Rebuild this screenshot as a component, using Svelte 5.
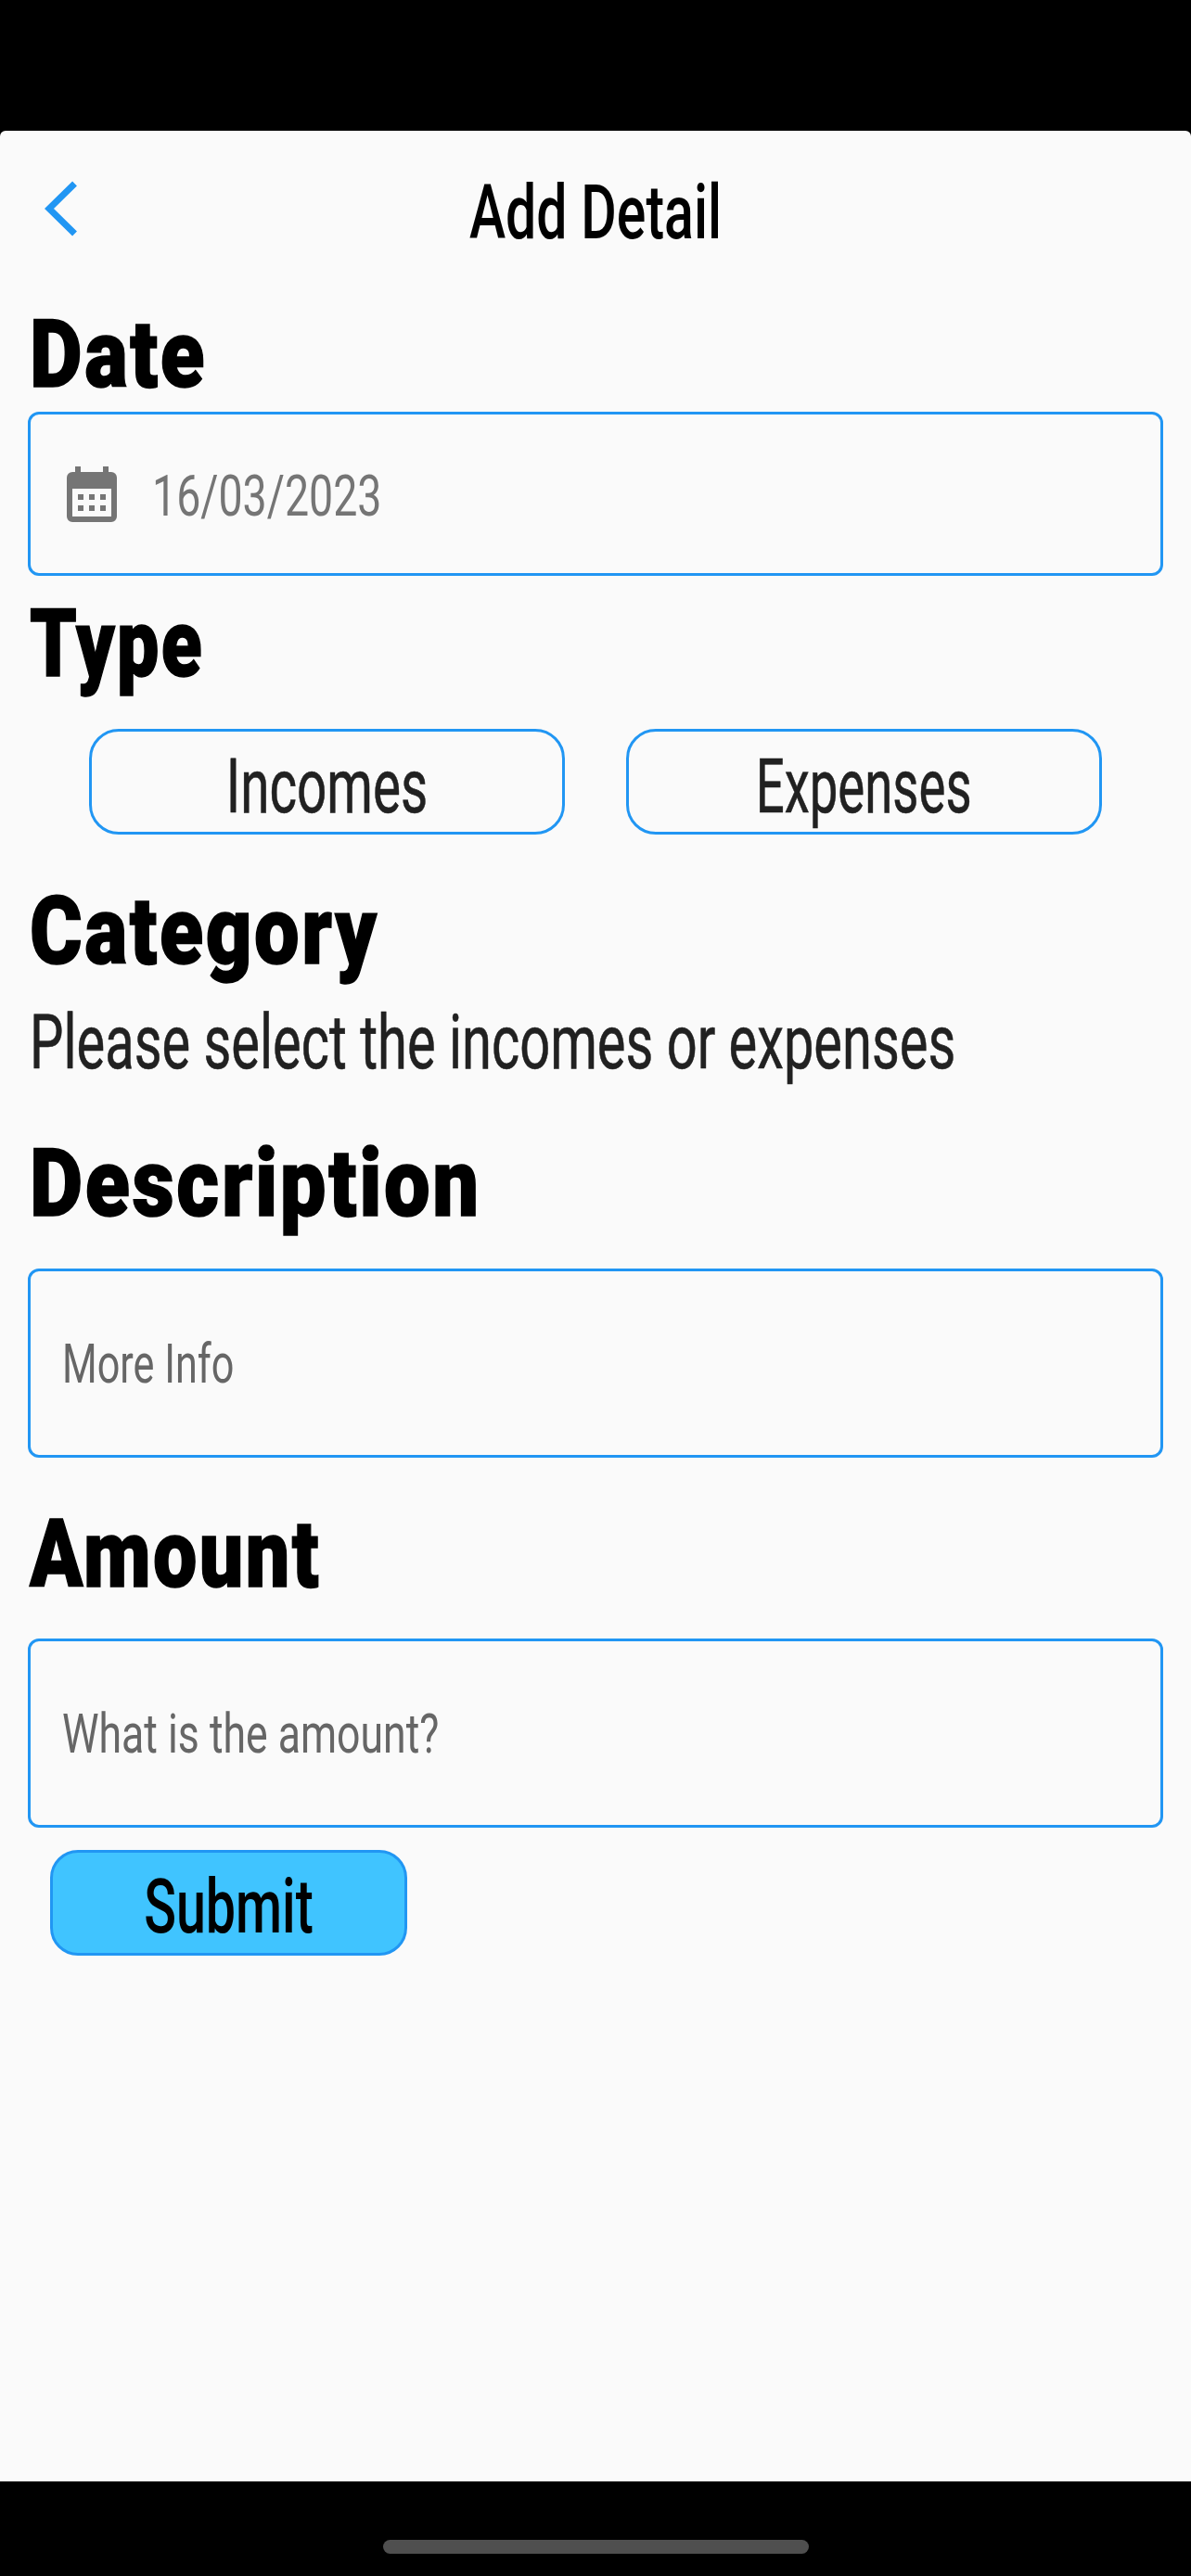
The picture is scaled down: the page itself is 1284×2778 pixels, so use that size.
<script lang="ts">
	// Add Detail form screen. Only static state, the type buttons do nothing yet.
	const date = '16/03/2023';
</script>

<div class="screen">
	<div class="status-bar"></div>

	<main class="page">
		<header class="top-bar">
			<svg class="back" viewBox="0 0 36 60" aria-hidden="true">
				<path d="M32.5 3 L5 30 L32.5 57" fill="none" stroke="#2196f3" stroke-width="7" />
			</svg>
			<h1 class="title"><span class="fit-c">Add Detail</span></h1>
		</header>

		<section class="date-field">
			<h2 class="label"><span class="fit w-date">Date</span></h2>
			<div class="input date-input">
				<svg class="calendar" viewBox="0 0 54 60" aria-hidden="true">
					<path
						fill="#757575"
						fill-rule="evenodd"
						d="M9 0h6v6h24V0h6v6h3a6 6 0 0 1 6 6v42a6 6 0 0 1-6 6H6a6 6 0 0 1-6-6V12a6 6 0 0 1 6-6h3zM6 24v30h42V24zM12 30h6v6h-6zM24 30h6v6h-6zM36 30h6v6h-6zM12 42h6v6h-6zM24 42h6v6h-6zM36 42h6v6h-6z"
					/>
				</svg>
				<span class="date-text"><span class="fit">{date}</span></span>
			</div>
		</section>

		<section class="type-field">
			<h2 class="label"><span class="fit w-type">Type</span></h2>
			<div class="type-row">
				<button class="type-btn"><span class="fit-c w-inc">Incomes</span></button>
				<button class="type-btn"><span class="fit-c w-exp">Expenses</span></button>
			</div>
		</section>

		<section class="category-field">
			<h2 class="label"><span class="fit w-cat">Category</span></h2>
			<p class="hint"><span class="fit">Please select the incomes or expenses</span></p>
		</section>

		<section class="desc-field">
			<h2 class="label"><span class="fit w-desc">Description</span></h2>
			<div class="input text-input"><span class="fit">More Info</span></div>
		</section>

		<section class="amount-field">
			<h2 class="label"><span class="fit w-amount">Amount</span></h2>
			<div class="input text-input amount-input"><span class="fit">What is the amount?</span></div>
		</section>

		<button class="submit"><span class="fit-c">Submit</span></button>
	</main>

	<footer class="nav-bar"><div class="home-pill"></div></footer>
</div>

<style>
	:global(body) {
		margin: 0;
		background: #000;
	}

	.screen {
		display: flex;
		flex-direction: column;
		height: 2778px;
		overflow: hidden;
		font-family: Roboto, 'Liberation Sans', sans-serif;
		background: #000;
	}

	.status-bar {
		flex: 0 0 141px;
	}

	.page {
		flex: 1;
		padding: 0 30px;
		background: #fafafa;
		border-radius: 6px 6px 0 0;
		overflow: hidden;
	}

	.nav-bar {
		flex: 0 0 102px;
		display: flex;
		justify-content: center;
		align-items: flex-start;
		padding-top: 63px;
		box-sizing: border-box;
	}

	.home-pill {
		width: 459px;
		height: 15px;
		border-radius: 8px;
		background: #4f4f4f;
	}

	/* condensed look: no Oswald here, so squeeze the sans */
	.fit,
	.fit-c {
		display: inline-block;
		white-space: nowrap;
		transform: scaleX(0.72);
		transform-origin: left center;
	}

	.fit-c {
		transform-origin: center;
	}

	.top-bar {
		display: grid;
		grid-template-columns: 1fr auto 1fr;
		align-items: center;
		height: 176px;
	}

	.back {
		width: 36px;
		height: 60px;
		margin: 0 0 8px 18px;
	}

	.title {
		margin: 0;
		font-size: 82px;
		font-weight: 500;
		line-height: 100px;
		color: #000;
	}

	.label {
		height: 127px;
		margin: 0;
		padding-left: 2px;
		font-size: 102px;
		font-weight: 900;
		line-height: 131px;
		letter-spacing: 3px;
		color: #000;
		-webkit-text-stroke: 1.5px #000;
	}

	.w-date { transform: scaleX(0.857); }
	.w-type { transform: scaleX(0.79); }
	.w-cat { transform: scaleX(0.848); }
	.w-desc { transform: scaleX(0.866); }
	.w-amount { transform: scaleX(0.826); }

	.input {
		display: flex;
		align-items: center;
		box-sizing: border-box;
		border: 3px solid #2196f3;
		border-radius: 12px;
	}

	.date-input {
		height: 177px;
		padding-left: 39px;
		gap: 38px;
	}

	.calendar {
		width: 54px;
		height: 60px;
	}

	.date-text {
		margin-top: 4px;
		font-size: 62px;
		color: #757575;
	}

	.date-text .fit { transform: scaleX(0.75); }

	.type-field .label {
		height: 143px;
		line-height: 146px;
	}

	.type-row {
		display: flex;
		justify-content: center;
		gap: 66px;
		margin-top: 22px;
	}

	.type-btn {
		width: 513px;
		height: 114px;
		padding: 10px 0 0;
		background: transparent;
		border: 3px solid #2196f3;
		border-radius: 32px;
		font-family: inherit;
		font-size: 82px;
		font-weight: 400;
		color: #212121;
		-webkit-text-stroke: 0.6px #212121;
	}

	.w-inc { transform: scaleX(0.69); }
	.w-exp { transform: scaleX(0.665); }

	.category-field {
		margin-top: 39px;
	}

	.category-field .label {
		line-height: 130px;
	}

	.hint {
		margin: 8px 0 0;
		padding-left: 2px;
		font-size: 82px;
		font-weight: 400;
		line-height: 100px;
		color: #212121;
		-webkit-text-stroke: 0.6px #212121;
	}

	.hint .fit { transform: scaleX(0.705); }

	.desc-field {
		margin-top: 33px;
	}

	.desc-field .label {
		line-height: 139px;
	}

	.text-input {
		height: 204px;
		margin-top: 34px;
		padding-left: 34px;
		font-size: 60px;
		color: #666;
	}

	.amount-field {
		margin-top: 36px;
	}

	.amount-field .label {
		line-height: 136px;
	}

	.amount-input {
		margin-top: 32px;
	}

	.amount-input .fit { transform: scaleX(0.743); }

	.submit {
		display: block;
		width: 385px;
		height: 114px;
		margin: 24px 0 0 24px;
		padding: 8px 0 0;
		background: #40c4ff;
		border: 3px solid #2196f3;
		border-radius: 30px;
		font-family: inherit;
		font-size: 82px;
		font-weight: 500;
		color: #000;
	}

	.submit .fit-c { transform: scaleX(0.7); }
</style>
